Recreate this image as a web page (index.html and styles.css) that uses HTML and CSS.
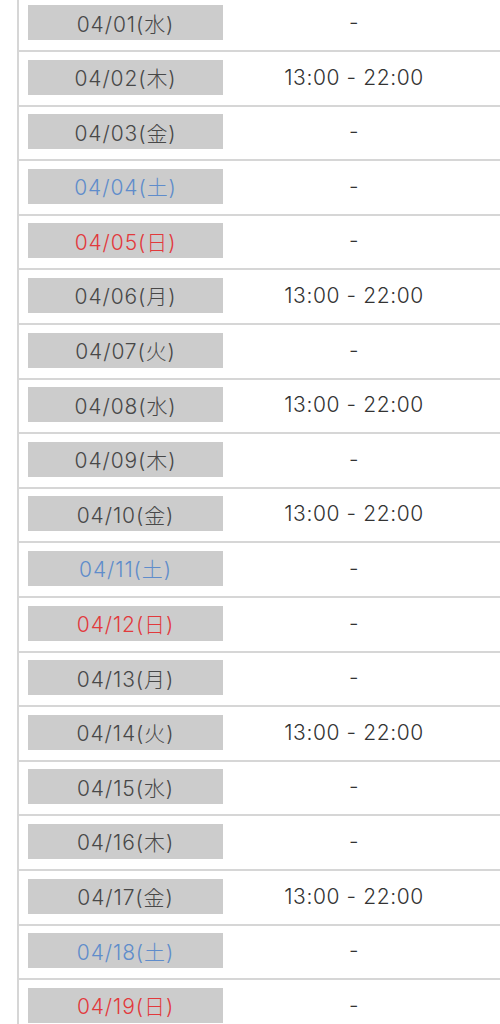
FILE: index.html
```html
<!DOCTYPE html>
<html lang="ja">
<head>
<meta charset="utf-8">
<title>Schedule</title>
<link rel="stylesheet" href="styles.css">
</head>
<body>
<div class="schedule">
  <div class="row"><div class="date">04/01(水)</div><div class="time">-</div></div>
  <div class="row"><div class="date">04/02(木)</div><div class="time">13:00 - 22:00</div></div>
  <div class="row"><div class="date">04/03(金)</div><div class="time">-</div></div>
  <div class="row"><div class="date sat">04/04(土)</div><div class="time">-</div></div>
  <div class="row"><div class="date sun">04/05(日)</div><div class="time">-</div></div>
  <div class="row"><div class="date">04/06(月)</div><div class="time">13:00 - 22:00</div></div>
  <div class="row"><div class="date">04/07(火)</div><div class="time">-</div></div>
  <div class="row"><div class="date">04/08(水)</div><div class="time">13:00 - 22:00</div></div>
  <div class="row"><div class="date">04/09(木)</div><div class="time">-</div></div>
  <div class="row"><div class="date">04/10(金)</div><div class="time">13:00 - 22:00</div></div>
  <div class="row"><div class="date sat">04/11(土)</div><div class="time">-</div></div>
  <div class="row"><div class="date sun">04/12(日)</div><div class="time">-</div></div>
  <div class="row"><div class="date">04/13(月)</div><div class="time">-</div></div>
  <div class="row"><div class="date">04/14(火)</div><div class="time">13:00 - 22:00</div></div>
  <div class="row"><div class="date">04/15(水)</div><div class="time">-</div></div>
  <div class="row"><div class="date">04/16(木)</div><div class="time">-</div></div>
  <div class="row"><div class="date">04/17(金)</div><div class="time">13:00 - 22:00</div></div>
  <div class="row"><div class="date sat">04/18(土)</div><div class="time">-</div></div>
  <div class="row"><div class="date sun">04/19(日)</div><div class="time">-</div></div>
</div>
</body>
</html>
```
FILE: styles.css
```css
html, body {
  margin: 0;
  padding: 0;
  background: #ffffff;
}
body {
  font-family: Inter, "Noto Sans CJK JP", sans-serif;
  color: #444444;
  overflow: hidden;
}
.schedule {
  margin-top: -4.6px;
  margin-left: 17px;
  border-left: 2px solid #d6d6d6;
}
.row {
  box-sizing: border-box;
  height: 54.6px;
  border-top: 2px solid #d6d6d6;
  padding: 7.6px 15px 10px 9px;
  display: grid;
  grid-template-columns: 195px 1fr;
  align-items: center;
}
.date {
  height: 35px;
  background: #cccccc;
  display: flex;
  align-items: center;
  justify-content: center;
  font-size: 21px;
  font-weight: 300;
  letter-spacing: 0.9px;
  color: #484848;
}
.date.sat { color: #5f8ccb; }
.date.sun { color: #e2393c; }
.time {
  text-align: center;
  font-size: 21px;
  font-weight: 300;
  letter-spacing: 0.6px;
  color: #333333;
}
```
